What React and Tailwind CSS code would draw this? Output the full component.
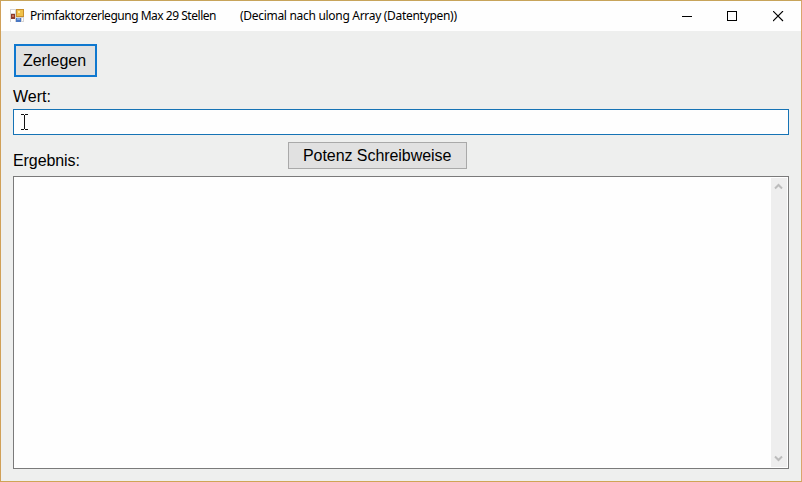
function FormIcon() {
  return (
    <svg className="h-[14px] w-[14px] shrink-0" viewBox="0 0 14 14" shapeRendering="crispEdges">
      <rect x="0" y="0" width="14" height="13" fill="#d6d4d4" />
      <rect x="1" y="1" width="4" height="3" fill="#fff" />
      <rect x="1" y="10" width="4" height="3" fill="#fff" />
      <rect x="1" y="5" width="4" height="5" fill="#8d3a2c" />
      <rect x="2" y="6" width="2" height="2" fill="#c8705a" />
      <rect x="6" y="0" width="8" height="8" fill="#c98f2c" />
      <rect x="7" y="1" width="6" height="6" fill="#f0c24a" />
      <rect x="8" y="2" width="2" height="2" fill="#fbe59a" />
      <rect x="6" y="9" width="5" height="4" fill="#4a78c4" />
      <rect x="7" y="9" width="3" height="2" fill="#86a9e0" />
      <rect x="12" y="9" width="1" height="3" fill="#fff" />
    </svg>
  );
}

function TitleBar() {
  return (
    <header className="flex h-[30px] shrink-0 items-center bg-[#fefefe] pl-[9px] font-['Noto_Sans','Open_Sans',sans-serif] text-[12px] leading-[16px] text-black">
      <FormIcon />
      <div className="ml-[6px] w-[210px] whitespace-pre tracking-[-0.48px]">Primfaktorzerlegung Max 29 Stellen</div>
      <div className="whitespace-pre tracking-[-0.3px]">(Decimal nach ulong Array (Datentypen))</div>
      <div className="ml-auto flex h-full">
        <button className="flex h-full w-[45px] items-center justify-center" aria-label="Minimieren">
          <svg className="h-[11px] w-[11px]" viewBox="0 0 11 11" shapeRendering="crispEdges">
            <path d="M0 5.5H10" stroke="#000" />
          </svg>
        </button>
        <button className="flex h-full w-[45px] items-center justify-center" aria-label="Maximieren">
          <svg className="h-[11px] w-[11px]" viewBox="0 0 11 11" shapeRendering="crispEdges">
            <rect x="0.5" y="0.5" width="9" height="9" fill="none" stroke="#000" />
          </svg>
        </button>
        <button className="flex h-full w-[46px] items-center justify-center" aria-label="Schließen">
          <svg className="h-[11px] w-[11px]" viewBox="0 0 11 11">
            <path d="M0 0L10 10M10 0L0 10" stroke="#000" strokeWidth="1.1" />
          </svg>
        </button>
      </div>
    </header>
  );
}

function ScrollBar() {
  return (
    <div className="flex w-[16px] flex-col items-center justify-between bg-[#eeeeee] pt-[5px] pb-[5px]">
      <svg className="mr-px h-[7px] w-[9px]" viewBox="0 0 9 7">
        <path d="M1 5.5L4.5 2L8 5.5" fill="none" stroke="#bcbcbc" strokeWidth="2" />
      </svg>
      <svg className="mr-px h-[7px] w-[9px]" viewBox="0 0 9 7">
        <path d="M1 1.5L4.5 5L8 1.5" fill="none" stroke="#bcbcbc" strokeWidth="2" />
      </svg>
    </div>
  );
}

export default function App() {
  return (
    <div className="flex h-[482px] w-[802px] flex-col overflow-hidden border border-t-[#c7a45a] border-r-[#d9a56c] border-b-[#cfa556] border-l-[#d0a058] bg-[#eeefee] font-['Liberation_Sans',Arial,sans-serif] text-[16px] leading-[18px] text-black">
      <TitleBar />
      <main className="flex flex-1 flex-col px-[12px] pt-[13px] pb-[12px]">
        <button className="ml-px flex h-[33px] w-[83px] shrink-0 items-center justify-center border-2 border-[#0f78cf] bg-[#e1e1e1] pr-[2px]">
          Zerlegen
        </button>
        <label className="mt-[11px] h-[21px] shrink-0">Wert:</label>
        <div className="flex h-[26px] shrink-0 items-center border border-[#1673b5] bg-[#fefefe] pl-[7px]">
          <svg className="h-[16px] w-[7px]" viewBox="0 0 7 16" shapeRendering="crispEdges">
            <path d="M0 0.5H3M4 0.5H7M3.5 1V15M0 15.5H3M4 15.5H7" stroke="#111" fill="none" />
          </svg>
        </div>
        <div className="flex h-[41px] shrink-0 items-start">
          <label className="w-[275px] pt-[17px] tracking-[-0.08px]">Ergebnis:</label>
          <button className="mt-[7px] flex h-[27px] w-[179px] items-center justify-start border border-[#a9a9a9] bg-[#e1e1e1] pl-[14px] tracking-[-0.06px]">
            Potenz Schreibweise
          </button>
        </div>
        <div className="flex flex-1 justify-end border border-[#7a7a7a] bg-[#fefefe] p-px">
          <ScrollBar />
        </div>
      </main>
    </div>
  );
}
